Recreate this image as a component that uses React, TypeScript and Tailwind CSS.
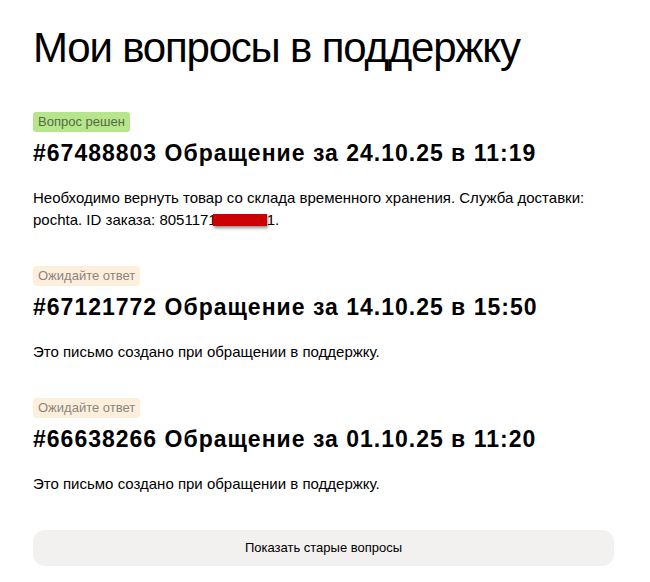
const tickets = [
  {
    id: "67488803",
    date: "24.10.25 в 11:19",
    status: "done",
    text: null,
  },
  {
    id: "67121772",
    date: "14.10.25 в 15:50",
    status: "wait",
    text: "Это письмо создано при обращении в поддержку.",
  },
  {
    id: "66638266",
    date: "01.10.25 в 11:20",
    status: "wait",
    text: "Это письмо создано при обращении в поддержку.",
  },
];

function Badge({ status }: { status: string }) {
  if (status === "done") {
    return (
      <span className="block w-fit rounded-[3px] bg-[#b6e58c] px-[5px] text-[13px] leading-[20px] text-[#556b45]">
        Вопрос решен
      </span>
    );
  }
  return (
    <span className="block w-fit rounded-[3px] bg-[#fdefdb] px-[5px] text-[13px] leading-[20px] text-[#8a8580]">
      Ожидайте ответ
    </span>
  );
}

export default function App() {
  return (
    <div className="min-h-[582px] bg-white px-[33px] pt-[23px] font-['Liberation_Sans',Arial,sans-serif] text-black">
      <h1 className="text-[42px] leading-[50px] tracking-[-1.2px]">Мои вопросы в поддержку</h1>
      <div className="mt-[39px] flex flex-col gap-[35px]">
        {tickets.map((t) => (
          <div key={t.id}>
            <Badge status={t.status} />
            <h2 className="mt-[7px] text-[23px] font-bold leading-[28px] tracking-[1px]">
              #{t.id} Обращение за {t.date}
            </h2>
            <p className="mt-[20px] max-w-[560px] text-[15px] leading-[22px]">
              {t.text ?? (
                <>
                  Необходимо вернуть товар со склада временного хранения. Служба доставки:
                  pochta. ID заказа: 8051171
                  <span className="ml-[-4px] inline-block h-[12px] w-[54px] bg-[#cc0000] align-[-1px] shadow-[1px_2px_3px_rgba(0,0,0,0.45)]" />
                  1.
                </>
              )}
            </p>
          </div>
        ))}
      </div>
      <button className="mt-[35px] h-[36px] w-[581px] rounded-[12px] bg-[#f2f1ef] text-[13px] text-black">
        Показать старые вопросы
      </button>
    </div>
  );
}
